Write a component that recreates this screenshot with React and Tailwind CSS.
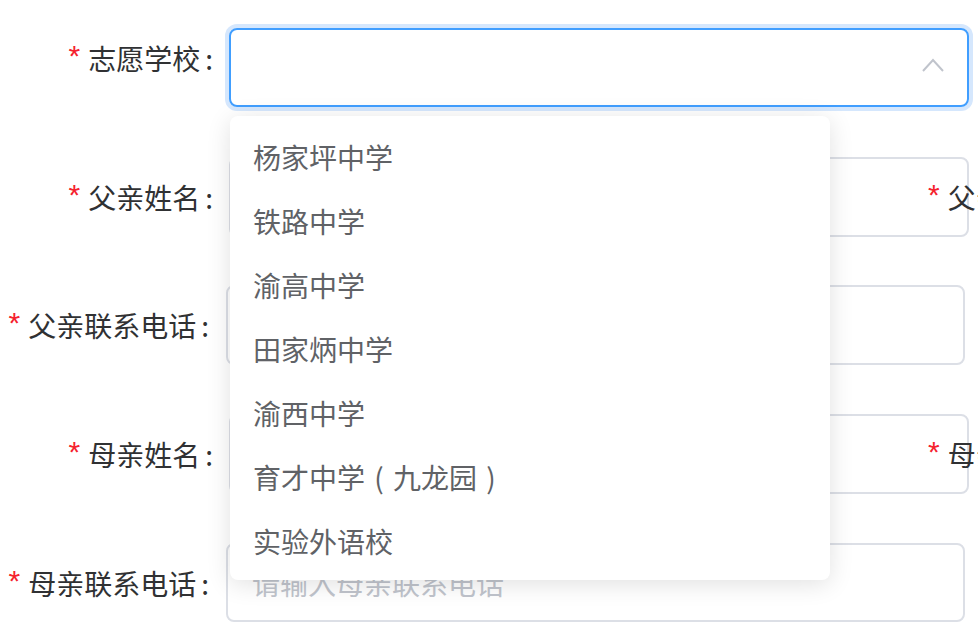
import React from "react";

const font = { fontFamily: '"Noto Sans CJK SC", "Noto Sans", sans-serif' };

function Star() {
  return (
    <span
      className="text-[#f5222d] text-[30px] leading-none mr-[8px] translate-y-[-2px]"
      style={{ fontFamily: '"Liberation Sans", Arial, sans-serif' }}
    >
      *
    </span>
  );
}

function Label({ text, w }) {
  return (
    <div className={`${w} shrink-0 flex justify-end items-center text-[28px] leading-none text-[#303133] whitespace-nowrap`}>
      <Star />
      <span>{text}</span>
      <span className="pl-[5px]">:</span>
    </div>
  );
}

function SideLabel({ text }) {
  return (
    <div className="absolute left-[928px] top-1/2 -translate-y-1/2 flex items-center text-[28px] leading-none text-[#303133] whitespace-nowrap">
      <Star />
      <span>{text}</span>
    </div>
  );
}

export default function App() {
  const items = ["杨家坪中学", "铁路中学", "渝高中学", "田家炳中学", "渝西中学"];
  return (
    <div className="relative w-[978px] h-[640px] overflow-hidden bg-white" style={font}>
      <div className="flex flex-col">
        {/* Row 1 select */}
        <div className="relative flex items-center mt-[28px] h-[79px]">
          <div className="-mt-[20px]">
            <Label text="志愿学校" w="w-[213px]" />
          </div>
          <div className="ml-[16px] w-[740px] h-[79px] rounded-[8px] border-2 border-[#409eff] shadow-[0_0_0_4px_#d5e7fd] flex items-center justify-end pr-[23px]">
            <svg width="22" height="14" viewBox="0 0 22 14" className="mt-[-6px]">
              <path d="M1 13 L11 2 L21 13" fill="none" stroke="#c0c4cc" strokeWidth="2" />
            </svg>
          </div>
        </div>
        {/* Row 2 */}
        <div className="relative flex items-center mt-[50px] h-[80px]">
          <Label text="父亲姓名" w="w-[213px]" />
          <div className="ml-[16px] w-[740px] h-[80px] rounded-[8px] border-2 border-[#dcdfe6]" />
          <SideLabel text="父亲" />
        </div>
        {/* Row 3 */}
        <div className="relative flex items-center mt-[48px] h-[80px]">
          <Label text="父亲联系电话" w="w-[209px]" />
          <div className="ml-[17px] w-[739px] h-[80px] rounded-[8px] border-2 border-[#dcdfe6]" />
        </div>
        {/* Row 4 */}
        <div className="relative flex items-center mt-[49px] h-[80px]">
          <Label text="母亲姓名" w="w-[213px]" />
          <div className="ml-[16px] w-[740px] h-[80px] rounded-[8px] border-2 border-[#dcdfe6]" />
          <SideLabel text="母亲" />
        </div>
        {/* Row 5 */}
        <div className="relative flex items-center mt-[49px] h-[79px]">
          <Label text="母亲联系电话" w="w-[209px]" />
          <div className="ml-[17px] w-[739px] h-[79px] rounded-[8px] border-2 border-[#dcdfe6] flex items-center pl-[24px] text-[28px] leading-none text-[#c0c4cc]">
            请输入母亲联系电话
          </div>
        </div>
      </div>

      {/* Dropdown */}
      <div className="absolute left-[230px] top-[116px] w-[600px] h-[464px] bg-white rounded-[8px] shadow-[0_4px_24px_rgba(0,0,0,0.12)] pt-[9px] pb-[7px]">
        {items.map((t) => (
          <div key={t} className="h-[64px] flex items-center pl-[23px] text-[28px] leading-none text-[#606266] whitespace-nowrap">
            {t}
          </div>
        ))}
        <div className="h-[64px] flex items-center pl-[23px] text-[28px] leading-none text-[#606266] whitespace-nowrap">
          <span>育才中学</span>
          <span className="inline-block w-[28px] text-center">(</span>
          <span>九龙园</span>
          <span className="inline-block w-[28px] text-center">)</span>
        </div>
        <div className="h-[64px] flex items-center pl-[23px] text-[28px] leading-none text-[#606266] whitespace-nowrap">
          实验外语校
        </div>
      </div>
    </div>
  );
}
